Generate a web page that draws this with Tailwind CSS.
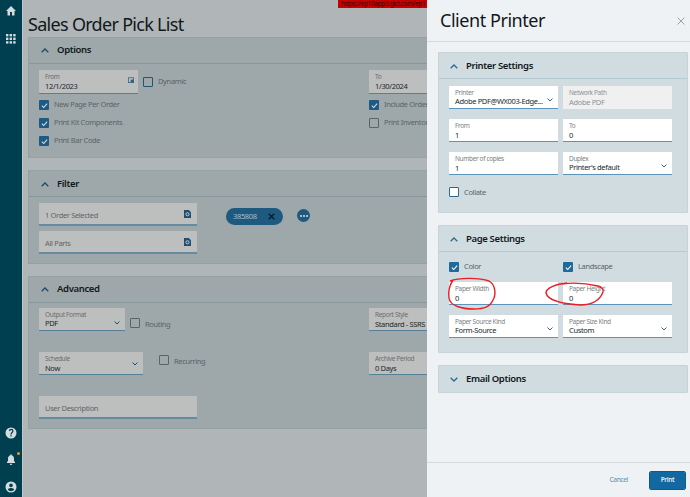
<!DOCTYPE html>
<html><head><meta charset="utf-8"><script src="https://cdn.jsdelivr.net/npm/@tailwindcss/browser@4"></script></head>
<body class="m-0">
<div class="relative w-[690px] h-[497px] overflow-hidden flex font-['Noto_Sans',sans-serif] tracking-[-0.35px] bg-[#b0b5b7]">
  <!-- sidebar -->
  <aside class="w-[22px] h-full bg-[#003f50] border-r border-[#c0c7c9] box-content flex flex-col items-center text-[#d4dcdf] shrink-0">
    <div class="w-[18px] flex flex-col items-center h-full">
    <svg class="mt-[5px] w-[12px] h-[12px]" viewBox="0 0 24 24" fill="currentColor"><path d="M10 21v-7h4v7h5v-9h3L12 2 2 12h3v9z"/></svg>
    <svg class="mt-[17px] w-[10px] h-[10px]" viewBox="0 0 10 10" fill="currentColor"><rect width="2.4" height="2.4"/><rect x="3.6" width="2.4" height="2.4"/><rect x="7.2" width="2.4" height="2.4"/><rect y="3.6" width="2.4" height="2.4"/><rect x="3.6" y="3.6" width="2.4" height="2.4"/><rect x="7.2" y="3.6" width="2.4" height="2.4"/><rect y="7.2" width="2.4" height="2.4"/><rect x="3.6" y="7.2" width="2.4" height="2.4"/><rect x="7.2" y="7.2" width="2.4" height="2.4"/></svg>
    <svg class="mt-auto w-[12px] h-[12px]" viewBox="0 0 24 24" fill="currentColor"><path d="M12 1a11 11 0 100 22 11 11 0 000-22zm1.300 18h-2.600v-2.600h2.600zm2.600-8.200l-1.100 1.200c-.9.900-1.500 1.600-1.500 3.200h-2.600v-.6c0-1.300.5-2.400 1.500-3.300l1.500-1.600c.4-.4.7-1 .7-1.600a2 2 0 00-4 0H7.800a4.600 4.600 0 019.200 0c0 1-.5 2-1.100 2.700z"/></svg>
    <div class="relative mt-[14px] h-[13px]">
      <svg class="w-[12px] h-[13px]" viewBox="0 0 24 24" fill="currentColor"><path d="M12 23a2.500 2.500 0 002.500-2.500h-5A2.500 2.500 0 0012 23zm8-6l-2-2v-5c0-3.200-1.700-5.800-4.700-6.600V2.700a1.300 1.300 0 10-2.600 0v.7C7.700 4.200 6 6.800 6 10v5l-2 2v2h16z"/></svg>
      <span class="absolute top-[-1px] right-[-3px] w-[3px] h-[3px] rounded-full bg-[#e59a2f]"></span>
    </div>
    <svg class="mt-[15px] mb-[4px] w-[12px] h-[12px]" viewBox="0 0 24 24" fill="currentColor"><path d="M12 1a11 11 0 100 22 11 11 0 000-22zm0 4a3.700 3.700 0 110 7.400A3.700 3.700 0 0112 5zm0 15.500a8.600 8.600 0 01-6.800-3.400c1.400-2 4.200-3 6.800-3s5.400 1 6.800 3a8.600 8.600 0 01-6.800 3.400z"/></svg>
    </div>
  </aside>

  <!-- main page (dimmed) -->
  <main class="flex-1 min-w-0 pl-[5px]">
    <h1 class="h-[37px] pt-[12px] text-[18px] leading-[24px] font-normal text-[#10181c] tracking-[-0.7px] whitespace-nowrap">Sales Order Pick List</h1>
    <div class="flex flex-col gap-[12px] w-[700px]">
      <section class="h-[121px] bg-[#9ea8aa] border border-[#94a2a4]">
        <header class="h-[26px] flex items-center pl-[12px] gap-[8px] border-b border-[#86989b]">
          <svg class="w-[8px] h-[5px] text-[#1c4a66]" viewBox="0 0 8 5" fill="none" stroke="currentColor" stroke-width="1.3"><path d="M.7 4.300 4 1l3.300 3.300"/></svg>
          <span class="text-[9.5px] font-semibold text-[#10181c]">Options</span>
        </header>
        <div class="pl-[10px] pt-[6px] grid grid-cols-[330px_200px]">
          <div>
            <div class="flex items-center gap-[5px]">
              <div class="relative w-[99px] h-[24px] bg-[#bdbebe] border-b border-[#567f98] pl-[6px] pt-[3px]">
                <div class="text-[6.5px] leading-[8px] text-[#6a6e70]">From</div>
                <div class="text-[7.5px] leading-[10px] text-[#22282b]">12/1/2023</div>
                <svg class="absolute right-[4px] top-[7px] w-[6px] h-[6px] text-[#36617c]" viewBox="0 0 8 8" fill="none" stroke="currentColor"><rect x=".5" y="1" width="7" height="6.500"/><rect x="4" y="4" width="3" height="3" fill="currentColor"/></svg>
              </div>
              <span class="w-[10px] h-[10px] border border-[#1f5577] rounded-[1px] bg-[#9ea8aa]"></span>
              <span class="text-[7.5px] text-[#5a6366]">Dynamic</span>
            </div>
            <div class="mt-[6px] flex flex-col gap-[8px]">
              <div class="flex items-center gap-[5px] h-[10px]"><span class="w-[10px] h-[10px] bg-[#1f5a82] rounded-[1px] flex items-center justify-center"><svg class="w-[7px] h-[7px]" viewBox="0 0 8 8" fill="none" stroke="#d8e0e4" stroke-width="1.2"><path d="M1 4.200 3.100 6.300 7 1.800"/></svg></span><span class="text-[7.5px] text-[#5a6366]">New Page Per Order</span></div>
              <div class="flex items-center gap-[5px] h-[10px]"><span class="w-[10px] h-[10px] bg-[#1f5a82] rounded-[1px] flex items-center justify-center"><svg class="w-[7px] h-[7px]" viewBox="0 0 8 8" fill="none" stroke="#d8e0e4" stroke-width="1.2"><path d="M1 4.200 3.100 6.300 7 1.800"/></svg></span><span class="text-[7.5px] text-[#5a6366]">Print Kit Components</span></div>
              <div class="flex items-center gap-[5px] h-[10px]"><span class="w-[10px] h-[10px] bg-[#1f5a82] rounded-[1px] flex items-center justify-center"><svg class="w-[7px] h-[7px]" viewBox="0 0 8 8" fill="none" stroke="#d8e0e4" stroke-width="1.2"><path d="M1 4.200 3.100 6.300 7 1.800"/></svg></span><span class="text-[7.5px] text-[#5a6366]">Print Bar Code</span></div>
            </div>
          </div>
          <div>
            <div class="w-[99px] h-[24px] bg-[#bdbebe] border-b border-[#567f98] pl-[6px] pt-[3px]">
              <div class="text-[6.5px] leading-[8px] text-[#6a6e70]">To</div>
              <div class="text-[7.5px] leading-[10px] text-[#22282b]">1/30/2024</div>
            </div>
            <div class="mt-[6px] flex flex-col gap-[8px]">
              <div class="flex items-center gap-[5px] h-[10px]"><span class="w-[10px] h-[10px] bg-[#1f5a82] rounded-[1px] flex items-center justify-center"><svg class="w-[7px] h-[7px]" viewBox="0 0 8 8" fill="none" stroke="#d8e0e4" stroke-width="1.2"><path d="M1 4.200 3.100 6.300 7 1.800"/></svg></span><span class="text-[7.5px] text-[#5a6366] whitespace-nowrap">Include Order Lines</span></div>
              <div class="flex items-center gap-[5px] h-[10px]"><span class="w-[10px] h-[10px] border border-[#5a6366] rounded-[1px]"></span><span class="text-[7.5px] text-[#5a6366] whitespace-nowrap">Print Inventory</span></div>
            </div>
          </div>
        </div>
      </section>

      <section class="h-[94px] bg-[#9ea8aa] border border-[#94a2a4]">
        <header class="h-[26px] pt-[1px] flex items-center pl-[12px] gap-[8px] border-b border-[#86989b]">
          <svg class="w-[8px] h-[5px] text-[#1c4a66]" viewBox="0 0 8 5" fill="none" stroke="currentColor" stroke-width="1.3"><path d="M.7 4.300 4 1l3.300 3.300"/></svg>
          <span class="text-[9.5px] font-semibold text-[#10181c]">Filter</span>
        </header>
        <div class="pl-[10px] pt-[6px] flex">
          <div class="flex flex-col gap-[5px]">
            <div class="relative w-[158px] h-[23px] bg-[#bdbebe] border-b-2 border-[#668a9f] pl-[6px] pt-[7px] text-[7.5px] leading-[10px] text-[#5f6568]">1 Order Selected<svg class="absolute right-[6px] top-[7px] w-[7px] h-[8px] text-[#1f4e71]" viewBox="0 0 8 9"><path fill="currentColor" d="M0 0h5.500L8 2.500V9H0z"/><circle cx="4" cy="4.800" r="1.800" fill="none" stroke="#d5dcdf"/></svg></div>
            <div class="relative w-[158px] h-[23px] bg-[#bdbebe] border-b-2 border-[#668a9f] pl-[6px] pt-[7px] text-[7.5px] leading-[10px] text-[#5f6568]">All Parts<svg class="absolute right-[6px] top-[7px] w-[7px] h-[8px] text-[#1f4e71]" viewBox="0 0 8 9"><path fill="currentColor" d="M0 0h5.500L8 2.500V9H0z"/><circle cx="4" cy="4.800" r="1.800" fill="none" stroke="#d5dcdf"/></svg></div>
          </div>
          <div class="ml-[29px] mt-[5px] w-[57px] h-[17px] rounded-full bg-[#1e5a80] flex items-center pl-[7px] text-[7.5px] text-[#a9bcc8]">385808<span class="ml-auto mr-[8px] text-[#0b1a24]"><svg class="w-[7px] h-[7px]" viewBox="0 0 7 7" fill="none" stroke="currentColor" stroke-width="1.300"><path d="M.7.700l5.600 5.600M6.300.700.700 6.300"/></svg></span></div>
          <div class="ml-[14px] mt-[6px] w-[13px] h-[13px] rounded-full bg-[#1e5a80] flex items-center justify-center gap-[1px]"><i class="w-[2px] h-[2px] bg-[#d5dfe5] rounded-full"></i><i class="w-[2px] h-[2px] bg-[#d5dfe5] rounded-full"></i><i class="w-[2px] h-[2px] bg-[#d5dfe5] rounded-full"></i></div>
        </div>
      </section>

      <section class="h-[153px] bg-[#9ea8aa] border border-[#94a2a4]">
        <header class="h-[26px] flex items-center pl-[12px] gap-[8px] border-b border-[#86989b]">
          <svg class="w-[8px] h-[5px] text-[#1c4a66]" viewBox="0 0 8 5" fill="none" stroke="currentColor" stroke-width="1.3"><path d="M.7 4.300 4 1l3.300 3.300"/></svg>
          <span class="text-[9.5px] font-semibold text-[#10181c]">Advanced</span>
        </header>
        <div class="pl-[10px] pt-[5px] grid grid-cols-[330px_200px]">
          <div>
            <div class="flex items-start">
              <div class="relative w-[86px] h-[23px] bg-[#bdbebe] border-b border-[#567f98] pl-[6px] pt-[3px]">
                <div class="text-[6.5px] leading-[8px] text-[#6a6e70]">Output Format</div>
                <div class="text-[7.5px] leading-[9px] text-[#22282b]">PDF</div>
                <svg class="absolute right-[5px] top-[13px] w-[6px] h-[4px] text-[#1f4e71]" viewBox="0 0 6 4" fill="none" stroke="currentColor"><path d="M.5.500 3 3l2.500-2.500"/></svg>
              </div>
              <span class="ml-[5px] mt-[10px] w-[10px] h-[10px] border border-[#5a6366] rounded-[1px]"></span>
              <span class="ml-[5px] mt-[11px] text-[7.5px] leading-[10px] text-[#5a6366]">Routing</span>
            </div>
            <div class="mt-[21px] flex items-start">
              <div class="relative w-[104px] h-[23px] bg-[#bdbebe] border-b border-[#567f98] pl-[6px] pt-[3px]">
                <div class="text-[6.5px] leading-[8px] text-[#6a6e70]">Schedule</div>
                <div class="text-[7.5px] leading-[10px] text-[#22282b]">Now</div>
                <svg class="absolute right-[5px] top-[10px] w-[6px] h-[4px] text-[#1f4e71]" viewBox="0 0 6 4" fill="none" stroke="currentColor"><path d="M.5.500 3 3l2.500-2.500"/></svg>
              </div>
              <span class="ml-[16px] mt-[3px] w-[10px] h-[10px] border border-[#5a6366] rounded-[1px]"></span>
              <span class="ml-[5px] mt-[4px] text-[7.5px] leading-[10px] text-[#5a6366]">Recurring</span>
            </div>
            <div class="mt-[21px] w-[158px] h-[23px] bg-[#bdbebe] border-b-2 border-[#668a9f] pl-[6px] pt-[7px] text-[7.5px] leading-[10px] text-[#5f6568]">User Description</div>
          </div>
          <div>
            <div class="w-[99px] h-[23px] bg-[#bdbebe] border-b border-[#567f98] pl-[6px] pt-[3px]">
              <div class="text-[6.5px] leading-[8px] text-[#6a6e70]">Report Style</div>
              <div class="text-[7.5px] leading-[10px] text-[#22282b]">Standard - SSRS</div>
            </div>
            <div class="mt-[21px] w-[99px] h-[23px] bg-[#bdbebe] border-b border-[#567f98] pl-[6px] pt-[3px]">
              <div class="text-[6.5px] leading-[8px] text-[#6a6e70]">Archive Period</div>
              <div class="text-[7.5px] leading-[10px] text-[#22282b]">0 Days</div>
            </div>
          </div>
        </div>
      </section>
    </div>
  </main>

  <!-- red url strip -->
  <div class="absolute left-[338px] top-0 w-[90px] h-[8px] bg-[#c80000] text-[6.5px] leading-[7px] pl-[3px] text-[#2a0808] whitespace-nowrap overflow-hidden">https://ep10app3.gict.com/ep1</div>

  <!-- slide-over panel -->
  <aside class="absolute right-0 top-0 bottom-0 w-[263px] bg-[#eef2f5] flex flex-col">
    <div class="h-[42px] shrink-0 flex items-center justify-between pl-[13px] pr-[5px] border-b border-[#d5dadd]">
      <span class="text-[18px] tracking-[-0.45px] text-[#10181c]">Client Printer</span>
      <svg class="w-[8px] h-[8px] text-[#9aa2a6]" viewBox="0 0 8 8" fill="none" stroke="currentColor"><path d="M.5.500l7 7M7.500.500l-7 7"/></svg>
    </div>
    <div class="flex-1 pl-[11px] pr-[2px] pt-[10px] flex flex-col gap-[12px]">
      <section class="h-[161px] bg-[#d0dce0] border border-[#c6d3d8] rounded-[1px]">
        <header class="h-[26px] pt-[1px] flex items-center pl-[11px] gap-[8px] border-b border-[#b5c9d2]">
          <svg class="w-[8px] h-[5px] text-[#2a6a94]" viewBox="0 0 8 5" fill="none" stroke="currentColor" stroke-width="1.3"><path d="M.7 4.300 4 1l3.300 3.300"/></svg>
          <span class="text-[9.5px] font-semibold text-[#10181c]">Printer Settings</span>
        </header>
        <div class="pl-[10px] pt-[7px] grid grid-cols-[109px_109px] gap-x-[5px] gap-y-[10px] w-[233px]">
          <div class="relative h-[23px] bg-white border-b border-[#5c93b8] pl-[6px] pt-[3px]"><div class="text-[6.5px] leading-[8px] text-[#7b8184]">Printer</div><div class="text-[7.5px] leading-[9px] text-[#22282b] whitespace-nowrap">Adobe PDF@WX003-Edge...</div><svg class="absolute right-[5px] top-[12px] w-[6px] h-[4px] text-[#2a6a94]" viewBox="0 0 6 4" fill="none" stroke="currentColor"><path d="M.5.500 3 3l2.500-2.500"/></svg></div>
          <div class="h-[23px] bg-[#f0f0f0] pl-[6px] pt-[3px]"><div class="text-[6.5px] leading-[8px] text-[#8d9294]">Network Path</div><div class="text-[7.5px] leading-[10px] text-[#8d9294]">Adobe PDF</div></div>
          <div class="h-[23px] bg-white border-b border-[#5c93b8] pl-[6px] pt-[3px]"><div class="text-[6.5px] leading-[8px] text-[#7b8184]">From</div><div class="text-[7.5px] leading-[10px] text-[#22282b]">1</div></div>
          <div class="h-[23px] bg-white border-b border-[#5c93b8] pl-[6px] pt-[3px]"><div class="text-[6.5px] leading-[8px] text-[#7b8184]">To</div><div class="text-[7.5px] leading-[10px] text-[#22282b]">0</div></div>
          <div class="h-[23px] bg-white border-b border-[#5c93b8] pl-[6px] pt-[3px]"><div class="text-[6.5px] leading-[8px] text-[#7b8184]">Number of copies</div><div class="text-[7.5px] leading-[10px] text-[#22282b]">1</div></div>
          <div class="relative h-[23px] bg-white border-b border-[#5c93b8] pl-[6px] pt-[3px]"><div class="text-[6.5px] leading-[8px] text-[#7b8184]">Duplex</div><div class="text-[7.5px] leading-[9px] text-[#22282b]">Printer's default</div><svg class="absolute right-[5px] top-[12px] w-[6px] h-[4px] text-[#2a6a94]" viewBox="0 0 6 4" fill="none" stroke="currentColor"><path d="M.5.500 3 3l2.500-2.500"/></svg></div>
          <div class="col-span-2 flex items-center gap-[5px] mt-[2px]"><span class="w-[10px] h-[10px] bg-white border border-[#2a6a94] rounded-[1px]"></span><span class="text-[7.5px] leading-[10px] text-[#5a6366]">Collate</span></div>
        </div>
      </section>
      <section class="h-[128px] bg-[#d0dce0] border border-[#c6d3d8] rounded-[1px]">
        <header class="h-[26px] pt-[1px] flex items-center pl-[11px] gap-[8px] border-b border-[#b5c9d2]">
          <svg class="w-[8px] h-[5px] text-[#2a6a94]" viewBox="0 0 8 5" fill="none" stroke="currentColor" stroke-width="1.3"><path d="M.7 4.300 4 1l3.300 3.300"/></svg>
          <span class="text-[9.5px] font-semibold text-[#10181c]">Page Settings</span>
        </header>
        <div class="pl-[10px] pt-[10px] grid grid-cols-[109px_109px] gap-x-[5px] gap-y-[10px] w-[233px]">
          <div class="flex items-center gap-[5px] h-[10px]"><span class="w-[10px] h-[10px] bg-[#1f6a9c] rounded-[1px] flex items-center justify-center"><svg class="w-[7px] h-[7px]" viewBox="0 0 8 8" fill="none" stroke="#fff" stroke-width="1.2"><path d="M1 4.200 3.100 6.300 7 1.800"/></svg></span><span class="text-[7.5px] text-[#5a6366]">Color</span></div>
          <div class="flex items-center gap-[5px] h-[10px]"><span class="w-[10px] h-[10px] bg-[#1f6a9c] rounded-[1px] flex items-center justify-center"><svg class="w-[7px] h-[7px]" viewBox="0 0 8 8" fill="none" stroke="#fff" stroke-width="1.2"><path d="M1 4.200 3.100 6.300 7 1.800"/></svg></span><span class="text-[7.5px] text-[#5a6366]">Landscape</span></div>
          <div class="h-[23px] bg-white border-b border-[#5c93b8] pl-[6px] pt-[3px]"><div class="text-[6.5px] leading-[8px] text-[#7b8184]">Paper Width</div><div class="text-[7.5px] leading-[10px] text-[#22282b]">0</div></div>
          <div class="h-[23px] bg-white border-b border-[#5c93b8] pl-[6px] pt-[3px]"><div class="text-[6.5px] leading-[8px] text-[#7b8184]">Paper Height</div><div class="text-[7.5px] leading-[10px] text-[#22282b]">0</div></div>
          <div class="relative h-[23px] bg-white border-b border-[#5c93b8] pl-[6px] pt-[3px]"><div class="text-[6.5px] leading-[8px] text-[#7b8184]">Paper Source Kind</div><div class="text-[7.5px] leading-[9px] text-[#22282b]">Form-Source</div><svg class="absolute right-[5px] top-[12px] w-[6px] h-[4px] text-[#2a6a94]" viewBox="0 0 6 4" fill="none" stroke="currentColor"><path d="M.5.500 3 3l2.500-2.500"/></svg></div>
          <div class="relative h-[23px] bg-white border-b border-[#5c93b8] pl-[6px] pt-[3px]"><div class="text-[6.5px] leading-[8px] text-[#7b8184]">Paper Size Kind</div><div class="text-[7.5px] leading-[9px] text-[#22282b]">Custom</div><svg class="absolute right-[5px] top-[12px] w-[6px] h-[4px] text-[#2a6a94]" viewBox="0 0 6 4" fill="none" stroke="currentColor"><path d="M.5.500 3 3l2.500-2.500"/></svg></div>
        </div>
      </section>
      <section class="h-[28px] bg-[#d0dce0] border border-[#c6d3d8] rounded-[1px] flex items-center pl-[11px] gap-[8px]">
        <svg class="w-[8px] h-[5px] text-[#2a6a94]" viewBox="0 0 8 5" fill="none" stroke="currentColor" stroke-width="1.3"><path d="M.7.700 4 4l3.300-3.300"/></svg>
        <span class="text-[9.5px] font-semibold text-[#10181c]">Email Options</span>
      </section>
    </div>
    <div class="h-[35px] shrink-0 border-t border-[#d5dadd] flex items-center justify-end pr-[5px]">
      <span class="text-[6.5px] font-medium text-[#6a9ab8] mr-[22px]">Cancel</span>
      <button class="w-[35px] h-[17px] bg-[#1268a0] rounded-[1px] outline outline-1 outline-[#0f5a8c] text-[6.5px] font-semibold text-[#e6eef3]">Print</button>
    </div>
  </aside>

  <!-- hand-drawn red circles -->
  <svg class="absolute left-0 top-0 w-[690px] h-[497px] pointer-events-none" viewBox="0 0 690 497" fill="none" stroke="#ee1c25" stroke-width="1.400">
    <path d="M450 281C458 278 478 277 489 281C496 285 496 295 493 300C490 307 484 309 474 309C462 309 450 306 449 298C448 291 449 286 453 280"/>
    <path d="M567 283C550 285 546 290 546 293C548 301 565 304 580 305C592 305 600 300 603 292C604 290 602 287 598 286C585 283 575 282 562 284"/>
  </svg>
</div>
</body></html>
